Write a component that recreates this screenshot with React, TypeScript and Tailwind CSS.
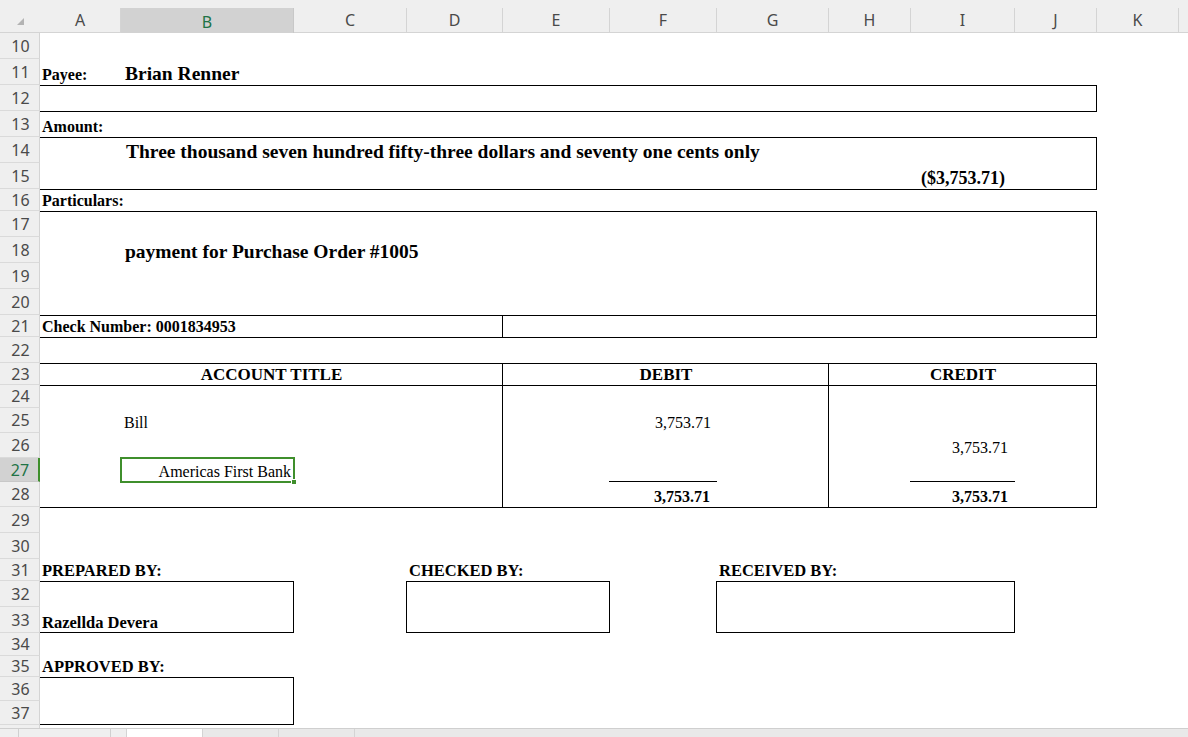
import type { ReactNode } from 'react';

const GREEN = 'border-[#3f8f2c]';

const COLS: { label: string; w: string; active?: boolean }[] = [
  { label: 'A', w: 'w-[81px]' },
  { label: 'B', w: 'w-[173px]', active: true },
  { label: 'C', w: 'w-[113px]' },
  { label: 'D', w: 'w-[96px]' },
  { label: 'E', w: 'w-[107px]' },
  { label: 'F', w: 'w-[107px]' },
  { label: 'G', w: 'w-[112px]' },
  { label: 'H', w: 'w-[82px]' },
  { label: 'I', w: 'w-[104px]' },
  { label: 'J', w: 'w-[82px]' },
  { label: 'K', w: 'w-[82px]' },
];

// row heights as excel shows them (rows 10 - 37)
const ROWS: { n: number; h: string }[] = [
  { n: 10, h: 'h-[26px]' },
  { n: 11, h: 'h-[26px]' },
  { n: 12, h: 'h-[26px]' },
  { n: 13, h: 'h-[26px]' },
  { n: 14, h: 'h-[26px]' },
  { n: 15, h: 'h-[26px]' },
  { n: 16, h: 'h-[22px]' },
  { n: 17, h: 'h-[26px]' },
  { n: 18, h: 'h-[26px]' },
  { n: 19, h: 'h-[26px]' },
  { n: 20, h: 'h-[26px]' },
  { n: 21, h: 'h-[22px]' },
  { n: 22, h: 'h-[26px]' },
  { n: 23, h: 'h-[22px]' },
  { n: 24, h: 'h-[23px]' },
  { n: 25, h: 'h-[25px]' },
  { n: 26, h: 'h-[25px]' },
  { n: 27, h: 'h-[24px]' },
  { n: 28, h: 'h-[25px]' },
  { n: 29, h: 'h-[26px]' },
  { n: 30, h: 'h-[26px]' },
  { n: 31, h: 'h-[22px]' },
  { n: 32, h: 'h-[26px]' },
  { n: 33, h: 'h-[26px]' },
  { n: 34, h: 'h-[23px]' },
  { n: 35, h: 'h-[21px]' },
  { n: 36, h: 'h-[24px]' },
  { n: 37, h: 'h-[24px]' },
];

function ColumnHeader() {
  return (
    <div className="h-[33px] shrink-0 flex bg-[#efefef] border-b border-[#d4d4d4]">
      <div className="w-[40px] shrink-0 flex items-end justify-end pr-[16px] pb-[7px]">
        <svg width="7" height="7" viewBox="0 0 7 7">
          <polygon points="7,0 7,7 0,7" fill="#b3b3b3" />
        </svg>
      </div>
      {COLS.map((c) =>
        c.active ? (
          <div key={c.label} className={`${c.w} shrink-0 flex flex-col`}>
            <div className="mt-[8px] flex-1 flex items-center justify-center bg-[#d2d2d2] border-r border-[#c8c8c8] border-b-2 border-b-[#3f8f2c] pt-[2px] text-[16px] text-[#217346]">
              {c.label}
            </div>
          </div>
        ) : (
          <div key={c.label} className={`${c.w} shrink-0 flex flex-col`}>
            <div className="mt-[8px] flex-1 flex items-center justify-center border-r border-[#d4d4d4] text-[16px] text-[#4a4a4a]">
              {c.label}
            </div>
          </div>
        ),
      )}
      <div className="flex-1" />
    </div>
  );
}

function RowHeader() {
  return (
    <div className="w-[40px] shrink-0 flex flex-col bg-[#efefef]">
      {ROWS.map((r) =>
        r.n === 27 ? (
          <div
            key={r.n}
            className={`${r.h} shrink-0 flex items-center justify-center pl-[2px] bg-[#d2d2d2] border-b border-[#c8c8c8] border-r-2 border-r-[#3f8f2c] text-[16px] text-[#217346]`}
          >
            {r.n}
          </div>
        ) : (
          <div
            key={r.n}
            className={`${r.h} shrink-0 flex items-center justify-center pl-[2px] border-b border-[#dadada] border-r border-r-[#d4d4d4] text-[16px] text-[#4a4a4a]`}
          >
            {r.n}
          </div>
        ),
      )}
      <div className="flex-1 border-r border-[#d4d4d4]" />
    </div>
  );
}

function Cell({ className, children }: { className: string; children?: ReactNode }) {
  return <div className={`flex items-end whitespace-nowrap leading-none pb-[2px] ${className}`}>{children}</div>;
}

function Sheet() {
  return (
    <div className="flex-1 grid grid-cols-[81px_173px_113px_96px_107px_107px_112px_82px_104px_82px_82px_1fr] grid-rows-[26px_26px_26px_26px_26px_26px_22px_26px_26px_26px_26px_22px_26px_22px_23px_25px_25px_24px_25px_26px_26px_22px_26px_26px_23px_21px_24px_24px_1fr] bg-white font-['Liberation_Serif',serif] text-black">
      {/* borders */}
      <div className="col-start-1 col-span-10 row-start-3 -mb-px border-y border-r border-black" />
      <div className="col-start-1 col-span-10 row-start-5 row-span-2 -mb-px border-y border-r border-black" />
      <div className="col-start-1 col-span-10 row-start-8 row-span-4 -mb-px border-y border-r border-black" />
      <div className="col-start-1 col-span-4 row-start-12 -mb-px border-b border-r border-black" />
      <div className="col-start-5 col-span-6 row-start-12 -mb-px border-b border-r border-black" />

      <div className="col-start-1 col-span-4 row-start-14 row-span-6 -mb-px border-y border-r border-black" />
      <div className="col-start-5 col-span-3 row-start-14 row-span-6 -mb-px border-y border-r border-black" />
      <div className="col-start-8 col-span-3 row-start-14 row-span-6 -mb-px border-y border-r border-black" />
      <div className="col-start-1 col-span-10 row-start-14 -mb-px border-b border-black" />
      <div className="col-start-6 row-start-18 -ml-px border-b border-black" />
      <div className="col-start-9 row-start-18 -ml-px border-b border-black" />

      <div className="col-start-1 col-span-2 row-start-23 row-span-2 border-y border-r border-black" />
      <div className="col-start-4 col-span-2 row-start-23 row-span-2 -ml-px border border-black" />
      <div className="col-start-7 col-span-3 row-start-23 row-span-2 -ml-px border border-black" />
      <div className="col-start-1 col-span-2 row-start-27 row-span-2 border-y border-r border-black" />

      {/* payee */}
      <Cell className="col-start-1 row-start-2 pl-[2px] text-[16px] font-bold">Payee:</Cell>
      <Cell className="col-start-2 row-start-2 pl-[4px] pb-[1px] text-[19.5px] font-bold">Brian Renner</Cell>

      {/* amount */}
      <Cell className="col-start-1 row-start-4 pl-[2px] pb-[1px] text-[16px] font-bold">Amount:</Cell>
      <Cell className="col-start-2 row-start-5 pl-[5px] text-[19.5px] font-bold">
        Three thousand seven hundred fifty-three dollars and seventy one cents only
      </Cell>
      <Cell className="col-start-9 row-start-6 justify-center text-[18px] font-bold">($3,753.71)</Cell>

      {/* particulars */}
      <Cell className="col-start-1 row-start-7 pl-[2px] pb-[1px] text-[16px] font-bold">Particulars:</Cell>
      <Cell className="col-start-2 row-start-9 pl-[4px] text-[19.5px] font-bold">payment for Purchase Order #1005</Cell>

      <Cell className="col-start-1 row-start-12 pl-[2px] text-[16px] font-bold">Check Number: 0001834953</Cell>

      {/* entries */}
      <Cell className="col-start-1 col-span-4 row-start-14 justify-center pb-[1px] text-[17px] font-bold">ACCOUNT TITLE</Cell>
      <Cell className="col-start-5 col-span-3 row-start-14 justify-center pb-[1px] text-[17px] font-bold">DEBIT</Cell>
      <Cell className="col-start-8 col-span-3 row-start-14 justify-center pb-[1px] text-[17px] font-bold">CREDIT</Cell>

      <Cell className="col-start-2 row-start-16 pl-[3px] text-[16px]">Bill</Cell>
      <Cell className="col-start-6 row-start-16 justify-end pr-[6px] text-[16px]">3,753.71</Cell>
      <Cell className="col-start-9 row-start-17 justify-end pr-[7px] pb-[1px] text-[16px]">3,753.71</Cell>

      <div className="col-start-2 row-start-18 relative">
        <Cell className="h-full justify-end pr-[3px] text-[16px]">Americas First Bank</Cell>
        <div className={`absolute -inset-px border-2 ${GREEN}`} />
        <div className="absolute -right-[3px] -bottom-[3px] w-[6px] h-[6px] bg-[#3f8f2c] border border-white" />
      </div>

      <Cell className="col-start-6 row-start-19 justify-end pr-[7px] text-[16px] font-bold">3,753.71</Cell>
      <Cell className="col-start-9 row-start-19 justify-end pr-[7px] text-[16px] font-bold">3,753.71</Cell>

      {/* signatures */}
      <Cell className="col-start-1 row-start-22 pl-[2px] pb-[1px] text-[16.5px] font-bold">PREPARED BY:</Cell>
      <Cell className="col-start-4 row-start-22 pl-[2px] pb-[1px] text-[16.5px] font-bold">CHECKED BY:</Cell>
      <Cell className="col-start-7 row-start-22 pl-[2px] pb-[1px] text-[16.5px] font-bold">RECEIVED BY:</Cell>
      <Cell className="col-start-1 row-start-24 pl-[2px] pb-[1px] text-[16.5px] font-bold">Razellda Devera</Cell>
      <Cell className="col-start-1 row-start-26 pl-[2px] pb-[1px] text-[16.5px] font-bold">APPROVED BY:</Cell>
    </div>
  );
}

function SheetTabs() {
  return (
    <div className="h-[9px] shrink-0 flex bg-[#e9e9e9] border-t border-[#cfcfcf]">
      <div className="w-[127px] flex bg-[#efefef] border-r border-[#d4d4d4]">
        <div className="w-[19px] border-r border-[#d0d0d0]" />
        <div className="w-[92px] border-r border-[#d0d0d0]" />
      </div>
      <div className="w-[75px] bg-white" />
      <div className="w-[77px] border-l border-r border-[#d4d4d4]" />
      <div className="w-[76px] border-r border-[#d4d4d4]" />
      <div className="flex-1" />
    </div>
  );
}

export default function App() {
  return (
    <div className="w-[1188px] h-[737px] overflow-hidden bg-white flex flex-col font-['Noto_Sans',sans-serif]">
      <ColumnHeader />
      <div className="flex h-[695px] shrink-0">
        <RowHeader />
        <Sheet />
      </div>
      <SheetTabs />
    </div>
  );
}
